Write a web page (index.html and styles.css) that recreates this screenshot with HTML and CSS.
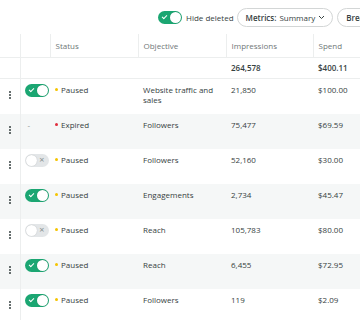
FILE: index.html
```html
<!DOCTYPE html>
<html lang="en">
<head>
    <meta charset="UTF-8">
    <meta name="viewport" content="width=device-width, initial-scale=1.0">
    <title>Campaigns</title>
    <link rel="stylesheet" href="styles.css">
</head>
<body>
    <div class="page">
        <div class="toolbar">
            <span class="switch on"><span class="knob"></span></span>
            <span class="toolbar-label">Hide deleted</span>
            <button class="pill"><b>Metrics:</b> Summary
                <svg width="7" height="5" viewBox="0 0 7 5"><path d="M1 1l2.5 2.5L6 1" fill="none" stroke="#364141" stroke-width="1"/></svg>
            </button>
            <button class="pill"><b>Breakdown:</b> None</button>
        </div>

        <table class="grid">
            <colgroup>
                <col style="width:20px">
                <col style="width:30px">
                <col style="width:88px">
                <col style="width:88px">
                <col style="width:87px">
                <col style="width:87px">
            </colgroup>
            <thead>
                <tr>
                    <th class="edge"></th>
                    <th></th>
                    <th>Status</th>
                    <th>Objective</th>
                    <th>Impressions</th>
                    <th>Spend</th>
                </tr>
            </thead>
            <tbody>
                <tr class="total">
                    <td class="edge"></td>
                    <td></td>
                    <td></td>
                    <td></td>
                    <td>264,578</td>
                    <td>$400.11</td>
                </tr>
                <tr>
                    <td class="edge"><span class="kebab"><i></i><i></i><i></i></span></td>
                    <td><span class="switch on"><span class="knob"></span></span></td>
                    <td><span class="dot paused"></span>Paused</td>
                    <td>Website traffic and<br>sales</td>
                    <td>21,850</td>
                    <td>$100.00</td>
                </tr>
                <tr class="alt">
                    <td class="edge"><span class="kebab"><i></i><i></i><i></i></span></td>
                    <td><span class="dash">-</span></td>
                    <td><span class="dot expired"></span>Expired</td>
                    <td>Followers</td>
                    <td>75,477</td>
                    <td>$69.59</td>
                </tr>
                <tr>
                    <td class="edge"><span class="kebab"><i></i><i></i><i></i></span></td>
                    <td><span class="switch"><span class="knob"></span></span></td>
                    <td><span class="dot paused"></span>Paused</td>
                    <td>Followers</td>
                    <td>52,160</td>
                    <td>$30.00</td>
                </tr>
                <tr class="alt">
                    <td class="edge"><span class="kebab"><i></i><i></i><i></i></span></td>
                    <td><span class="switch on"><span class="knob"></span></span></td>
                    <td><span class="dot paused"></span>Paused</td>
                    <td>Engagements</td>
                    <td>2,734</td>
                    <td>$45.47</td>
                </tr>
                <tr>
                    <td class="edge"><span class="kebab"><i></i><i></i><i></i></span></td>
                    <td><span class="switch"><span class="knob"></span></span></td>
                    <td><span class="dot paused"></span>Paused</td>
                    <td>Reach</td>
                    <td>105,783</td>
                    <td>$80.00</td>
                </tr>
                <tr class="alt">
                    <td class="edge"><span class="kebab"><i></i><i></i><i></i></span></td>
                    <td><span class="switch on"><span class="knob"></span></span></td>
                    <td><span class="dot paused"></span>Paused</td>
                    <td>Reach</td>
                    <td>6,455</td>
                    <td>$72.95</td>
                </tr>
                <tr>
                    <td class="edge"><span class="kebab"><i></i><i></i><i></i></span></td>
                    <td><span class="switch on"><span class="knob"></span></span></td>
                    <td><span class="dot paused"></span>Paused</td>
                    <td>Followers</td>
                    <td>119</td>
                    <td>$2.09</td>
                </tr>
            </tbody>
        </table>
    </div>
</body>
</html>
```

FILE: styles.css
```css
body {
    margin: 0;
    background-color: #fff;
    color: #364141;
    font-family: "Open Sans", Arial, sans-serif;
    overflow: hidden;
}
.page {
    width: 420px;
}
.toolbar {
    display: flex;
    align-items: center;
    height: 34px;
    padding-left: 158px;
    box-sizing: border-box;
}
.toolbar > * {
    flex-shrink: 0;
}
.toolbar-label {
    font-size: 8px;
    margin-left: 4px;
    margin-right: 3px;
    color: #364141;
    white-space: nowrap;
}
.pill {
    display: inline-flex;
    align-items: center;
    gap: 3px;
    height: 19px;
    padding: 0 7px 0 8px;
    margin-right: 4px;
    border: 1px solid #d3d6d6;
    border-radius: 10px;
    background-color: #fff;
    color: #364141;
    font-family: inherit;
    font-size: 8px;
    white-space: nowrap;
}
.pill b {
    font-weight: 600;
}

/* toggles */
.switch {
    position: relative;
    display: inline-block;
    width: 24px;
    height: 13px;
    border-radius: 7px;
    background-color: #e3e6e8;
    vertical-align: middle;
}
.switch::after {
    content: "\00d7";
    position: absolute;
    right: 4px;
    top: -1px;
    font-size: 9px;
    line-height: 13px;
    color: #8a9191;
}
.switch .knob {
    position: absolute;
    left: 1px;
    top: 1px;
    width: 11px;
    height: 11px;
    border-radius: 50%;
    background-color: #fff;
    box-shadow: 0 0 1px rgba(0,0,0,0.25);
}
.switch.on {
    background-color: #1ba672;
}
.switch.on::after {
    content: "";
    left: 5px;
    right: auto;
    top: 3px;
    width: 2px;
    height: 4px;
    border: solid #fff;
    border-width: 0 1px 1px 0;
    transform: rotate(45deg);
}
.switch.on .knob {
    left: 12px;
}

/* table */
.grid {
    border-collapse: collapse;
    table-layout: fixed;
    width: 400px;
    font-size: 8px;
}
.grid th {
    height: 23px;
    padding: 0 5px;
    text-align: left;
    font-weight: 400;
    color: #6f7777;
    border-left: 1px solid #eceeee;
    border-bottom: 1px solid #eceeee;
    vertical-align: middle;
}
.grid th.edge {
    border-left: none;
}
.grid td {
    padding: 6px 5px 0;
    height: 29px;
    vertical-align: top;
    line-height: 10px;
    white-space: nowrap;
}
.grid tr.total td {
    height: 20px;
    padding-top: 0;
    vertical-align: middle;
    font-weight: 600;
    border-bottom: 1px solid #eceeee;
}
.grid td.edge {
    border-right: 1px solid #eceeee;
    text-align: center;
    padding: 6px 0 0;
}
.grid tr.alt td {
    background-color: #f5f7f7;
}
.grid td:nth-child(2) {
    padding: 5px 0 0 4px;
}

.kebab {
    display: inline-flex;
    flex-direction: column;
    gap: 1px;
    padding-top: 1px;
}
.kebab i {
    width: 2px;
    height: 2px;
    border-radius: 50%;
    background-color: #364141;
}
.dash {
    display: inline-block;
    padding: 1px 0 0 3px;
    color: #8a9191;
}
.dot {
    display: inline-block;
    width: 3px;
    height: 3px;
    border-radius: 50%;
    margin-right: 3px;
    vertical-align: 2px;
}
.dot.paused {
    background-color: #f5c400;
}
.dot.expired {
    background-color: #e02c3c;
}
```
